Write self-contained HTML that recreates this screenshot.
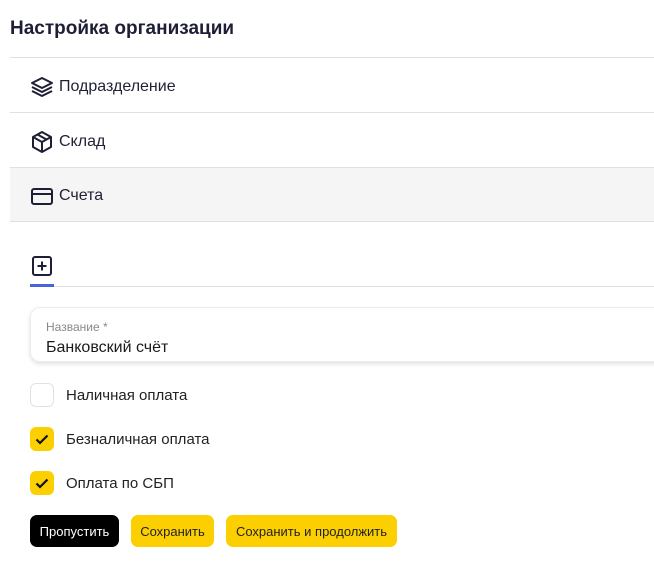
<!DOCTYPE html>
<html><head><meta charset="utf-8"><style>
*{box-sizing:border-box;margin:0;padding:0}
body{width:654px;height:564px;background:#fff;font-family:"Liberation Sans","DejaVu Sans",sans-serif;color:#1f2033;position:relative;overflow:hidden}
.title{position:absolute;left:10px;top:18px;font-size:19px;font-weight:bold;color:#1e1f36}
.row{position:absolute;left:10px;width:644px;height:55px;border-top:1px solid #e0e0e0;display:flex;align-items:center;font-size:16px;padding-top:3px}
.row svg{margin-left:20px;margin-right:5px}
.cb{position:absolute;left:30px;width:24px;height:24px;border-radius:6px}
.lab{position:absolute;left:66px;font-size:15px;color:#222}
.btn{position:absolute;top:515px;height:32px;border-radius:7px;font-size:13px;display:flex;align-items:center;justify-content:center;background:#fcd000;color:#222;padding-top:1px}
</style></head><body>
<div class="title">Настройка организации</div>
<div class="row" style="top:57px">
<svg width="24" height="24" viewBox="0 0 24 24" fill="none" stroke="#1e1f36" stroke-width="2" stroke-linejoin="round"><path d="M12 3L2 8l10 5 10-5z"/><path d="M2 12l10 5 10-5"/><path d="M2 16l10 5 10-5"/></svg>Подразделение</div>
<div class="row" style="top:112px">
<svg width="24" height="24" viewBox="0 0 24 24" fill="none" stroke="#1e1f36" stroke-width="2" stroke-linejoin="round"><path d="M12 2l9 5v10l-9 5-9-5V7z"/><path d="M3 7l9 5 9-5M12 12v10M7.5 4.5l9 5"/></svg>Склад</div>
<div class="row" style="top:167px;background:#f5f5f5;border-bottom:1px solid #e0e0e0">
<svg width="24" height="24" viewBox="0 0 24 24" fill="none" stroke="#1e1f36" stroke-width="2"><rect x="2" y="5" width="20" height="15" rx="2"/><path d="M2 10h20"/></svg>Счета</div>
<svg style="position:absolute;left:32px;top:256px" width="20" height="20" viewBox="0 0 20 20" fill="none" stroke="#1e1f36" stroke-width="2"><rect x="1" y="1" width="18" height="18" rx="2"/><path d="M10 5.5v9M5.5 10h9"/></svg>
<div style="position:absolute;left:30px;top:286px;width:624px;height:1px;background:#e0e0e0"></div>
<div style="position:absolute;left:30px;top:284px;width:24px;height:3px;background:#4a63d8"></div>
<div style="position:absolute;left:30px;top:307px;width:640px;height:55px;border:1px solid #ececec;border-radius:10px;box-shadow:0 2px 4px rgba(0,0,0,.12)">
<div style="position:absolute;left:15px;top:12px;font-size:12px;color:#888">Название *</div>
<div style="position:absolute;left:15px;top:31px;font-size:16px;color:#1a1a1a">Банковский счёт</div></div>
<div class="cb" style="top:383px;border:1px solid #e2e2e2"></div>
<div class="lab" style="top:387px">Наличная оплата</div>
<div class="cb" style="top:427px;background:#fcd000"><svg width="24" height="24" viewBox="0 0 24 24" fill="none" stroke="#111" stroke-width="2.2"><path d="M6.5 12.5l3.5 3.5L17.5 8.5"/></svg></div>
<div class="lab" style="top:431px">Безналичная оплата</div>
<div class="cb" style="top:471px;background:#fcd000"><svg width="24" height="24" viewBox="0 0 24 24" fill="none" stroke="#111" stroke-width="2.2"><path d="M6.5 12.5l3.5 3.5L17.5 8.5"/></svg></div>
<div class="lab" style="top:475px">Оплата по СБП</div>
<div class="btn" style="left:30px;width:89px;background:#000;color:#fff">Пропустить</div>
<div class="btn" style="left:131px;width:83px">Сохранить</div>
<div class="btn" style="left:226px;width:171px">Сохранить и продолжить</div>
</body></html>
